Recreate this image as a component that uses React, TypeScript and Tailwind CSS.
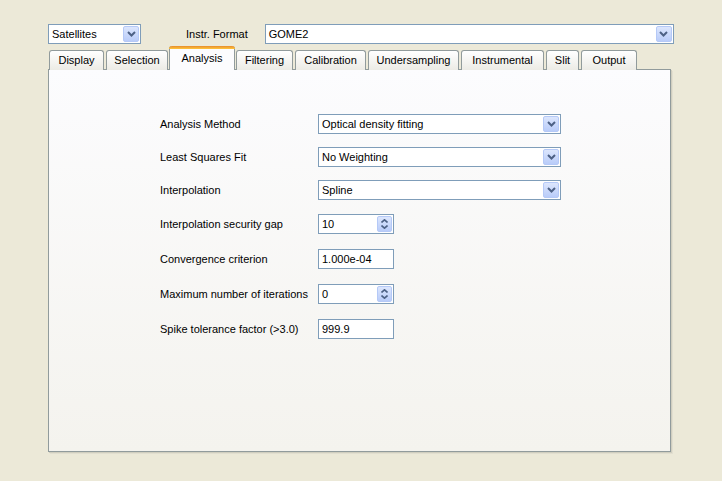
import React from "react";

const font = { fontFamily: '"Liberation Sans", Arial, sans-serif' };

function Chevron() {
  return (
    <svg width="9" height="6" viewBox="0 0 9 6">
      <path d="M1 1 L4.5 4.5 L8 1" fill="none" stroke="#4D6185" strokeWidth="2" />
    </svg>
  );
}

function ArrowBtn() {
  return (
    <div className="w-[16px] h-[16px] mr-[1px] rounded-[2px] border border-[#B5C9F7] bg-gradient-to-b from-[#DCE6FD] to-[#B9CCF9] flex items-center justify-center">
      <Chevron />
    </div>
  );
}

function Combo({ text, w }: { text: string; w: string }) {
  return (
    <div className={`${w} h-[20px] border border-[#7F9DB9] bg-white flex items-center justify-between`}>
      <span className="pl-[3px] text-[11px] text-black leading-none">{text}</span>
      <ArrowBtn />
    </div>
  );
}

function Spin({ text }: { text: string }) {
  return (
    <div className="w-[76px] h-[20px] border border-[#7F9DB9] bg-white flex items-center justify-between">
      <span className="pl-[3px] text-[11px] text-black leading-none">{text}</span>
      <div className="w-[15px] h-[16px] mr-[1px] rounded-[2px] border border-[#B5C9F7] bg-gradient-to-b from-[#DCE6FD] to-[#B9CCF9] flex flex-col items-center justify-center gap-[2px]">
        <svg width="7" height="4" viewBox="0 0 7 4">
          <path d="M0.5 3.5 L3.5 0.8 L6.5 3.5" fill="none" stroke="#4D6185" strokeWidth="1.6" />
        </svg>
        <svg width="7" height="4" viewBox="0 0 7 4">
          <path d="M0.5 0.5 L3.5 3.2 L6.5 0.5" fill="none" stroke="#4D6185" strokeWidth="1.6" />
        </svg>
      </div>
    </div>
  );
}

function Field({ text }: { text: string }) {
  return (
    <div className="w-[76px] h-[20px] border border-[#7F9DB9] bg-white flex items-center">
      <span className="pl-[3px] text-[11px] text-black leading-none">{text}</span>
    </div>
  );
}

const tabs = [
  { name: "Display", w: "w-[55px]" },
  { name: "Selection", w: "w-[62px]" },
  { name: "Analysis", w: "w-[66px]", sel: true },
  { name: "Filtering", w: "w-[57px]" },
  { name: "Calibration", w: "w-[71px]" },
  { name: "Undersampling", w: "w-[91px]" },
  { name: "Instrumental", w: "w-[83px]" },
  { name: "Slit", w: "w-[33px]" },
  { name: "Output", w: "w-[56px]" },
];

function Row({ label, mt, children }: { label: string; mt: string; children: React.ReactNode }) {
  return (
    <div className={`flex items-center ${mt}`}>
      <div className="w-[158px] text-[11px] text-black leading-none">{label}</div>
      {children}
    </div>
  );
}

export default function App() {
  return (
    <div className="w-[722px] h-[481px] bg-[#ECE9D8] overflow-hidden" style={font}>
      <div className="pt-[24px] pl-[48px] flex items-center">
        <Combo text="Satellites" w="w-[93px]" />
        <span className="ml-[45px] text-[11px] text-black">Instr. Format</span>
        <div className="ml-[17px]">
          <Combo text="GOME2" w="w-[409px]" />
        </div>
      </div>
      <div className="pl-[49px] mt-[3px] flex items-end gap-[2px] h-[23px] relative z-10 -mb-px">
        {tabs.map((t) =>
          t.sel ? (
            <div
              key={t.name}
              className={`${t.w} -mx-[1px] h-[24px] bg-[#FCFCFE] border-x border-[#919B9C] rounded-t-[3px] flex flex-col`}
            >
              <div className="h-[3px] -mx-[1px] rounded-t-[3px] bg-gradient-to-b from-[#E68B2C] to-[#FFC73C]" />
              <div className="flex-1 flex items-center justify-center text-[11px] text-black pb-[2px]">
                {t.name}
              </div>
            </div>
          ) : (
            <div
              key={t.name}
              className={`${t.w} h-[20px] border border-b-0 border-[#919B9C] rounded-t-[3px] bg-gradient-to-b from-white to-[#ECEBE5] flex items-center justify-center text-[11px] text-black`}
            >
              {t.name}
            </div>
          )
        )}
      </div>
      <div className="ml-[48px] w-[623px] h-[383px] border border-[#919B9C] bg-gradient-to-b from-[#FCFCFE] to-[#F4F3EE] shadow-[1px_1px_0_#D0CEBF,2px_2px_0_#E2DFD0]">
        <div className="pl-[111px] pt-[44px] flex flex-col">
          <Row label="Analysis Method" mt="mt-0">
            <Combo text="Optical density fitting" w="w-[243px]" />
          </Row>
          <Row label="Least Squares Fit" mt="mt-[13px]">
            <Combo text="No Weighting" w="w-[243px]" />
          </Row>
          <Row label="Interpolation" mt="mt-[13px]">
            <Combo text="Spline" w="w-[243px]" />
          </Row>
          <Row label="Interpolation security gap" mt="mt-[14px]">
            <Spin text="10" />
          </Row>
          <Row label="Convergence criterion" mt="mt-[15px]">
            <Field text="1.000e-04" />
          </Row>
          <Row label="Maximum number of iterations" mt="mt-[15px]">
            <Spin text="0" />
          </Row>
          <Row label="Spike tolerance factor (>3.0)" mt="mt-[15px]">
            <Field text="999.9" />
          </Row>
        </div>
      </div>
    </div>
  );
}
